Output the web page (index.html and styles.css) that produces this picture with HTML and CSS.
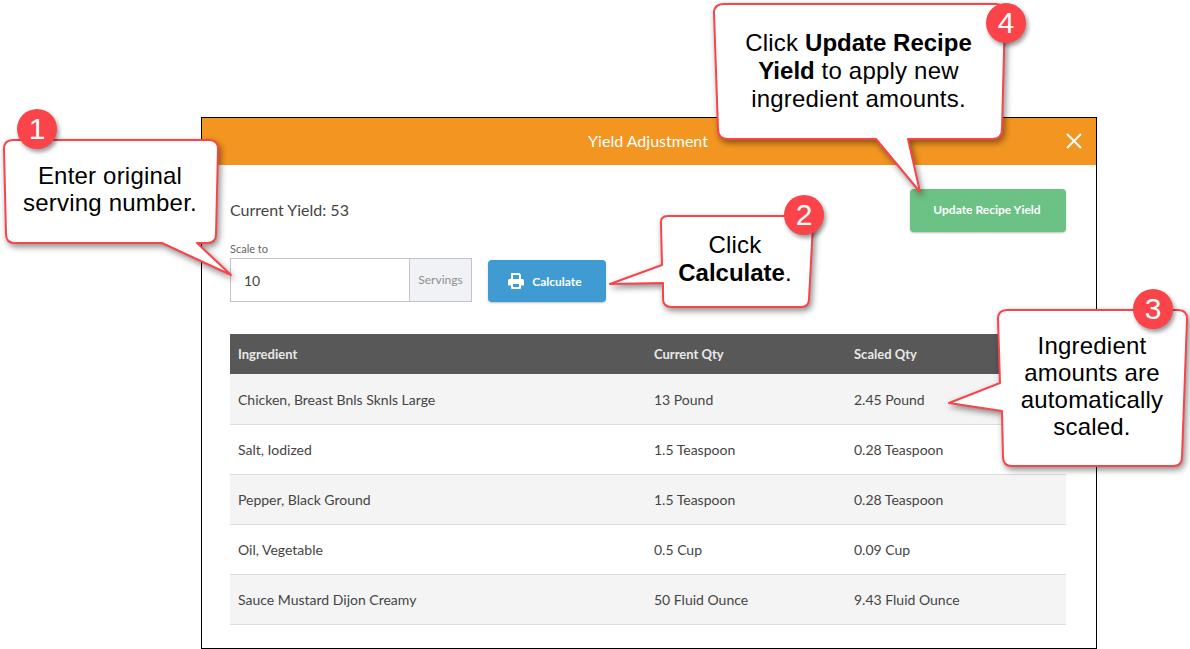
FILE: index.html
```html
<!DOCTYPE html>
<html lang="en">
<head>
<meta charset="utf-8">
<title>Yield Adjustment</title>
<link rel="stylesheet" href="styles.css">
</head>
<body>
<div class="stage">
  <section class="modal">
    <header class="modal-head">
      <h1 class="modal-title">Yield Adjustment</h1>
      <svg class="close" viewBox="0 0 16 16" width="16" height="16"><path d="M1 1 15 15M15 1 1 15"/></svg>
    </header>
    <div class="modal-body">
      <div class="top-row">
        <div class="form-col">
          <p class="current">Current Yield: 53</p>
          <div class="scale-row">
            <div class="field">
              <label class="field-label">Scale to</label>
              <div class="input-group">
                <span class="input">10</span>
                <span class="addon">Servings</span>
              </div>
            </div>
            <button class="btn btn-blue">
              <svg class="print" viewBox="0 0 16 16" width="16" height="16"><path d="M3 0h8.2L13 1.8V6h-2V2.2L10.400 2H5v4H3zM1.500 6h13A1.500 1.500 0 0 1 16 7.500V12a.5.5 0 0 1-.5.5H13V15a1 1 0 0 1-1 1H4a1 1 0 0 1-1-1v-2.500H.5A.5.5 0 0 1 0 12V7.500A1.500 1.500 0 0 1 1.500 6zM5 11v3h6v-3z" fill-rule="evenodd"/></svg>
              Calculate
            </button>
          </div>
        </div>
        <button class="btn btn-green">Update Recipe Yield</button>
      </div>
      <table class="grid">
        <thead>
          <tr><th class="c1">Ingredient</th><th class="c2">Current Qty</th><th>Scaled Qty</th></tr>
        </thead>
        <tbody>
          <tr><td>Chicken, Breast Bnls Sknls Large</td><td>13 Pound</td><td>2.45 Pound</td></tr>
          <tr><td>Salt, Iodized</td><td>1.5 Teaspoon</td><td>0.28 Teaspoon</td></tr>
          <tr><td>Pepper, Black Ground</td><td>1.5 Teaspoon</td><td>0.28 Teaspoon</td></tr>
          <tr><td>Oil, Vegetable</td><td>0.5 Cup</td><td>0.09 Cup</td></tr>
          <tr><td>Sauce Mustard Dijon Creamy</td><td>50 Fluid Ounce</td><td>9.43 Fluid Ounce</td></tr>
        </tbody>
      </table>
    </div>
  </section>

  <aside class="callout c-one">
    <svg class="bubble" width="240" height="145" viewBox="0 0 240 145"><path d="M10 1H206Q215 1 215 10L213 95Q213 104 204 104H194L228 136 159 104H12Q3 104 3 95L1 10Q1 1 10 1Z"/></svg>
    <p class="callout-text">Enter original<br>serving number.</p>
  </aside>
  <aside class="callout c-two">
    <svg class="bubble" width="225" height="100" viewBox="0 0 225 100"><path d="M65 9Q64 1 72 1H209Q217 1 217 9L213 84Q213 92 205 92H76Q67 92 67 84V68L14 69 66 50Z"/></svg>
    <p class="callout-text">Click<br><b>Calculate</b>.</p>
  </aside>
  <aside class="callout c-three">
    <svg class="bubble" width="245" height="165" viewBox="0 0 245 165"><path d="M51 10Q51 1 60 1H231Q240 1 240 10L235 148Q235 157 226 157H65Q56 157 56 148L55 102 2 94 53 74Z"/></svg>
    <p class="callout-text">Ingredient<br>amounts are<br>automatically<br>scaled.</p>
  </aside>
  <aside class="callout c-four">
    <svg class="bubble" width="300" height="195" viewBox="0 0 300 195"><path d="M11 1H283Q292 1 292 10L289 126Q289 136 279 136H195L207 189 163 136H15Q5 136 5 126L1 10Q1 1 11 1Z"/></svg>
    <p class="callout-text">Click <b>Update Recipe<br>Yield</b> to apply new<br>ingredient amounts.</p>
  </aside>

  <span class="badge b-one">1</span>
  <span class="badge b-two">2</span>
  <span class="badge b-three">3</span>
  <span class="badge b-four">4</span>
</div>
</body>
</html>
```

FILE: styles.css
```css
* { box-sizing: border-box; }
html, body { margin: 0; padding: 0; background: #fff; }
body { font-family: Lato, "Liberation Sans", sans-serif; color: #444; overflow: hidden; }
.stage { position: relative; width: 1190px; height: 649px; padding: 117px 93px 0 201px; overflow: hidden; }
.modal { width: 896px; height: 532px; border: 1px solid #000; background: #fff; }
.modal-head { height: 47px; background: #f39621; display: flex; align-items: center; justify-content: center; position: relative; padding: 0 2px 2px 0; }
.modal-title { margin: 0; font-size: 16px; font-weight: 400; color: #fff; }
.close { position: absolute; right: 14px; top: 15px; }
.close path { stroke: #fff; stroke-width: 2; fill: none; }
.modal-body { padding: 24px 30px 0 28px; }
.top-row { display: flex; justify-content: space-between; align-items: flex-start; }
.current { margin: 12px 0 0; font-size: 16px; line-height: 18px; color: #444; }
.scale-row { display: flex; align-items: flex-end; gap: 16px; margin-top: 23px; }
.field-label { display: block; font-size: 11px; line-height: 14px; color: #666; margin-bottom: 2px; }
.input-group { display: flex; width: 242px; height: 44px; border: 1px solid #c4c4c4; }
.input { flex: 1; padding-left: 13px; font-size: 14px; line-height: 44px; color: #444; }
.addon { width: 62px; border-left: 1px solid #c4c4c4; background: #f1f2f6; font-size: 12px; line-height: 42px; text-align: center; color: #8f8f8f; }
.btn { border: 0; border-radius: 4px; color: #fff; font-family: inherit; font-size: 12px; font-weight: 700; display: flex; align-items: center; justify-content: center; box-shadow: 0 1px 2px rgba(0,0,0,.25); padding: 0; }
.btn-blue { width: 118px; height: 42px; background: #3f9bd2; gap: 8px; padding-right: 4px; }
.print { fill: #fff; }
.btn-green { width: 156px; height: 43px; background: #6cc185; padding: 0 2px 2px 0; }
.grid { width: 836px; margin-top: 32px; border-collapse: collapse; table-layout: fixed; font-size: 14px; }
.grid th { height: 40px; background: #585858; color: #e8e8e8; font-size: 13px; font-weight: 700; text-align: left; padding: 0 8px; }
.c1 { width: 416px; }
.c2 { width: 200px; }
.grid td { height: 50px; padding: 1px 8px 0; border-bottom: 1px solid #ddd; color: #444; }
.grid tbody tr:nth-child(odd) { background: #f4f4f4; }
.callout { position: absolute; display: flex; align-items: center; justify-content: center; }
.bubble { position: absolute; left: 0; top: 0; overflow: visible; filter: drop-shadow(2px 3px 3px rgba(0,0,0,.45)); }
.bubble path { fill: #fff; stroke: #fb434a; stroke-width: 2; stroke-linejoin: round; }
.callout-text { position: relative; margin: 0; font-family: "Liberation Sans", Arial, sans-serif; font-size: 24px; line-height: 27px; text-align: center; color: #000; letter-spacing: .2px; white-space: nowrap; }
.callout-text b { letter-spacing: 0; }
.c-one { left: 3px; top: 139px; width: 214px; height: 104px; padding-bottom: 4px; }
.c-two { left: 596px; top: 215px; width: 215px; height: 92px; padding: 0 0 5px 63px; }
.c-three { left: 947px; top: 309px; width: 240px; height: 157px; padding: 0 0 3px 50px; }
.c-four { left: 713px; top: 3px; width: 293px; height: 136px; padding: 0 2px 0 0; }
.c-two .callout-text, .c-four .callout-text { line-height: 28px; }
.badge { position: absolute; width: 40px; height: 40px; border-radius: 50%; background: #fb434a; color: #fff; font-family: "Liberation Sans", Arial, sans-serif; font-size: 30px; line-height: 40px; text-align: center; box-shadow: 2px 3px 4px rgba(0,0,0,.4); }
.b-one { left: 17px; top: 109px; }
.b-two { left: 784px; top: 195px; }
.b-three { left: 1133px; top: 289px; }
.b-four { left: 986px; top: 3px; }
```
